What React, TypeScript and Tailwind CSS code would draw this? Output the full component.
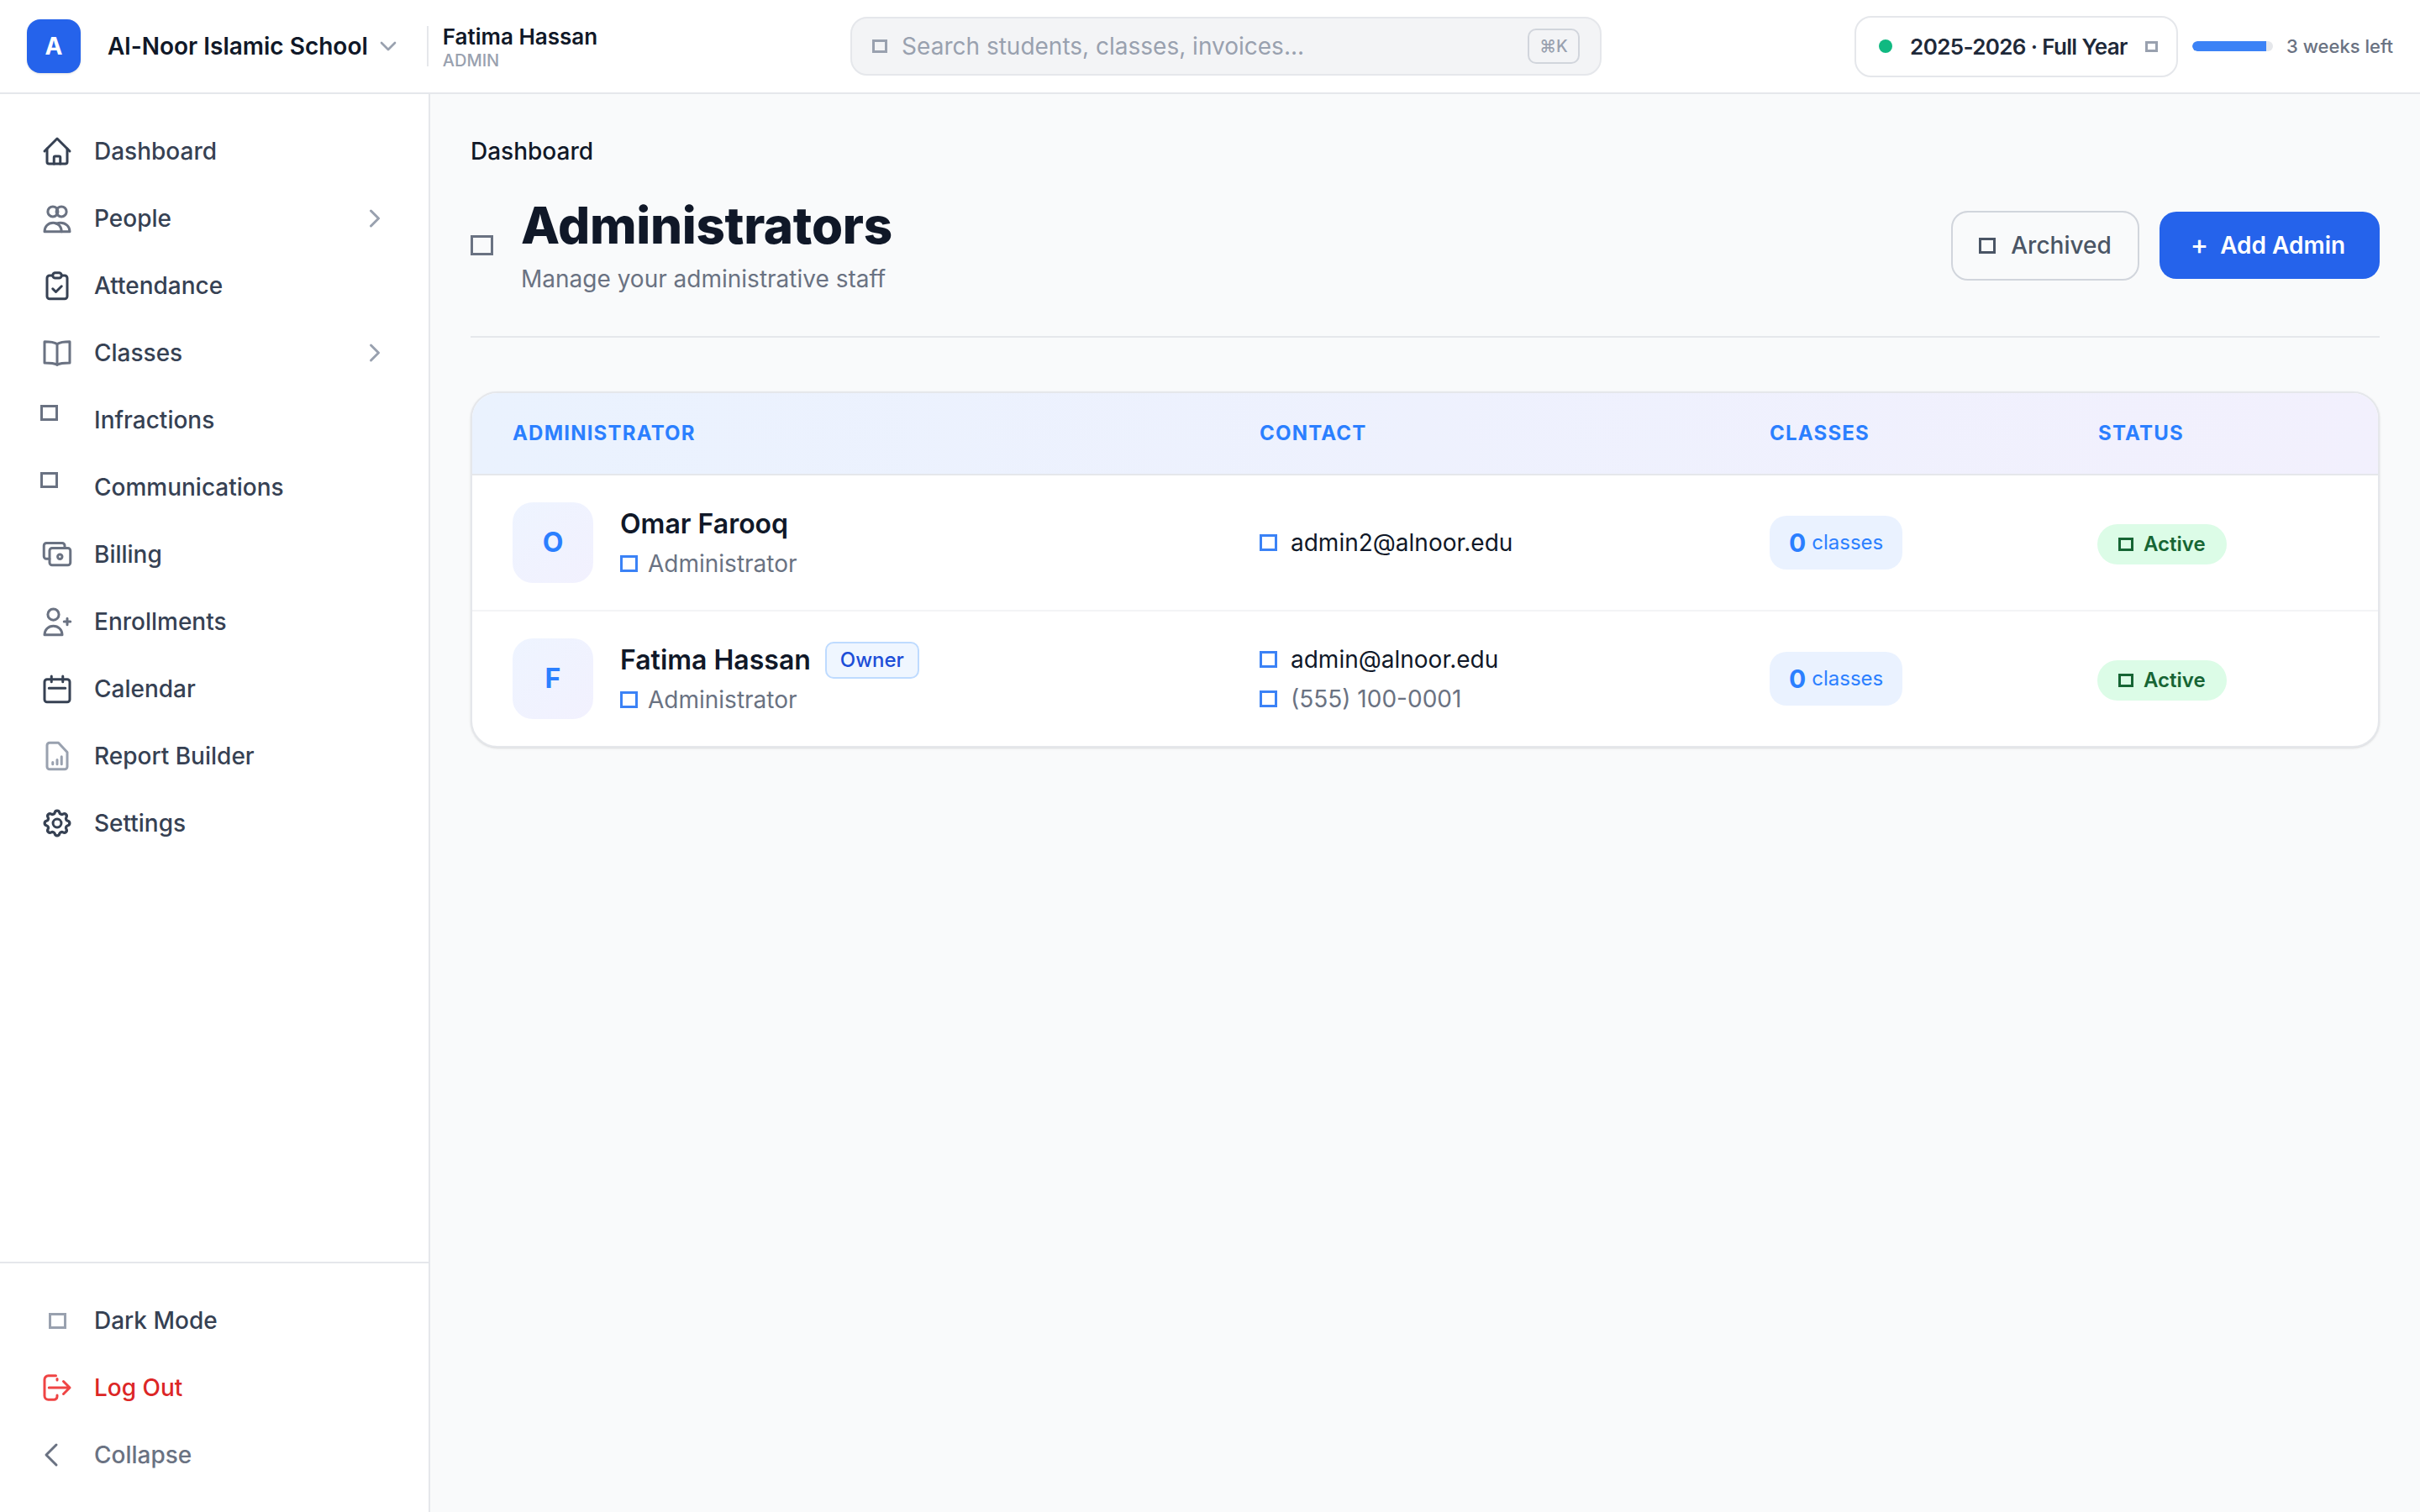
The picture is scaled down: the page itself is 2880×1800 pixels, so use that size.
import { ChevronDown, ChevronLeft, ChevronRight } from 'lucide-react'
import type { ReactNode } from 'react'

const Tofu = ({ className = '' }: { className?: string }) => (
  <span className={`block shrink-0 border-[3px] ${className}`} />
)

const Ico = ({ children, className = '' }: { children: ReactNode; className?: string }) => (
  <svg
    viewBox="0 0 24 24"
    fill="none"
    stroke="currentColor"
    strokeWidth={2}
    strokeLinecap="round"
    strokeLinejoin="round"
    className={`w-9 h-9 shrink-0 ${className}`}
  >
    {children}
  </svg>
)

const nav = [
  {
    label: 'Dashboard',
    icon: (
      <Ico className="text-gray-700">
        <path d="M2 12 12 2l10 10" />
        <path d="M4 10v10.5a1.5 1.5 0 0 0 1.5 1.5h13a1.5 1.5 0 0 0 1.5-1.5V10" />
        <path d="M9.5 22v-5a1 1 0 0 1 1-1h3a1 1 0 0 1 1 1v5" />
      </Ico>
    ),
  },
  {
    label: 'People',
    arrow: true,
    icon: (
      <Ico className="text-gray-500">
        <circle cx="8.6" cy="6.6" r="4" />
        <circle cx="15.4" cy="6.6" r="4" />
        <path d="M2 22.5c0-4 2.8-7 6.8-7s6.7 3 6.7 7z" />
        <path d="M11.5 16.2c1-.5 2.2-.7 3.2-.7 4.3 0 7.3 3 7.3 7h-6.5" />
      </Ico>
    ),
  },
  {
    label: 'Attendance',
    icon: (
      <Ico className="text-gray-700">
        <path d="M8.5 4H6a2 2 0 0 0-2 2v14.5a2 2 0 0 0 2 2h12a2 2 0 0 0 2-2V6a2 2 0 0 0-2-2h-2.5" />
        <rect x="8.5" y="1.8" width="7" height="4.2" rx="2" />
        <path d="m8.5 14.5 2.5 2.5 4.5-4.5" />
      </Ico>
    ),
  },
  {
    label: 'Classes',
    arrow: true,
    icon: (
      <Ico className="text-gray-500">
        <path d="M12 5C10 3.800 7 3.200 2 3.200V20c5 0 8 .4 10 1.500 2-1.100 5-1.500 10-1.500V3.200C17 3.200 14 3.800 12 5z" />
        <path d="M12 5v16.500" />
      </Ico>
    ),
  },
  { label: 'Infractions', tofu: true },
  { label: 'Communications', tofu: true },
  {
    label: 'Billing',
    icon: (
      <Ico className="text-gray-500">
        <path d="M18 6.500V5a2 2 0 0 0-2-2H3.500a2 2 0 0 0-2 2v8.500a2 2 0 0 0 2 2H6" />
        <rect x="6" y="7" width="16.500" height="13.500" rx="2" />
        <circle cx="14.200" cy="13.800" r="1.800" />
      </Ico>
    ),
  },
  {
    label: 'Enrollments',
    icon: (
      <Ico className="text-gray-500">
        <circle cx="9" cy="6.400" r="4.400" />
        <path d="M2 22.500c0-4 3-7 7-7s7 3 7 7z" />
        <path d="M17.500 12h5M20 9.500v5" />
      </Ico>
    ),
  },
  {
    label: 'Calendar',
    icon: (
      <Ico className="text-gray-700">
        <rect x="2" y="4.500" width="20" height="18" rx="2" />
        <path d="M7.500 2v4.500M16.500 2v4.500M5.500 11.500h13" />
      </Ico>
    ),
  },
  {
    label: 'Report Builder',
    icon: (
      <Ico className="text-gray-400">
        <path d="M6 1.500h7l7 7.500v11.500a2 2 0 0 1-2 2H6a2 2 0 0 1-2-2v-17a2 2 0 0 1 2-2z" />
        <path d="M8.500 18.500v-1.500M12 18.500v-3.500M15.500 18.500v-6" />
      </Ico>
    ),
  },
  {
    label: 'Settings',
    icon: (
      <Ico className="text-gray-700">
        <path d="M10.325 4.317c.426-1.756 2.924-1.756 3.35 0a1.724 1.724 0 0 0 2.573 1.066c1.543-.94 3.31.826 2.37 2.37a1.724 1.724 0 0 0 1.065 2.572c1.756.426 1.756 2.924 0 3.35a1.724 1.724 0 0 0-1.066 2.573c.94 1.543-.826 3.31-2.37 2.37a1.724 1.724 0 0 0-2.572 1.065c-.426 1.756-2.924 1.756-3.35 0a1.724 1.724 0 0 0-2.573-1.066c-1.543.94-3.31-.826-2.37-2.37a1.724 1.724 0 0 0-1.065-2.572c-1.756-.426-1.756-2.924 0-3.35a1.724 1.724 0 0 0 1.066-2.573c-.94-1.543.826-3.31 2.37-2.37 1 .608 2.296.07 2.572-1.065z" transform="translate(-1.200 -1.200) scale(1.100)" />
        <circle cx="12" cy="12" r="3.300" />
      </Ico>
    ),
  },
]

const NavItem = ({ label, icon, arrow, tofu }: { label: string; icon?: ReactNode; arrow?: boolean; tofu?: boolean }) => (
  <div className="flex items-center h-20 pl-[50px] pr-[46px] gap-[26px] text-[28px] font-medium text-gray-700">
    {tofu ? (
      <span className="w-9 h-9 shrink-0">
        <Tofu className="w-[21px] h-[19px] border-gray-500 -ml-[2px]" />
      </span>
    ) : (
      icon
    )}
    <span className="flex-1">{label}</span>
    {arrow && <ChevronRight strokeWidth={2} className="w-9 h-9 text-gray-400" />}
  </div>
)

const Sidebar = () => (
  <aside className="w-[512px] shrink-0 flex flex-col justify-between bg-white border-r-2 border-gray-200">
    <nav className="pt-7">
      {nav.map((n) => (
        <NavItem key={n.label} {...n} />
      ))}
    </nav>
    <div className="border-t-2 border-gray-200 py-7">
      <div className="flex items-center h-20 pl-[50px] gap-[26px] text-[28px] font-medium text-gray-700">
        <span className="w-9 h-9 shrink-0 flex items-center justify-center">
          <Tofu className="w-[21px] h-[19px] border-gray-400" />
        </span>
        Dark Mode
      </div>
      <div className="flex items-center h-20 pl-[50px] gap-[26px] text-[28px] font-medium text-[#dc2626]">
        <Ico className="text-[#ef4444]">
          <path d="M11 2.500H5a3 3 0 0 0-3 3v13a3 3 0 0 0 3 3h4.500a2.500 2.500 0 0 0 2.500-2.500V18" />
          <path d="M12 6V5" />
          <path d="M5.500 12H22M17 7l5 5-5 5" />
        </Ico>
        Log Out
      </div>
      <div className="flex items-center h-20 pl-[50px] gap-[26px] text-[28px] font-medium text-gray-500">
        <span className="w-9 h-9 shrink-0 flex items-center justify-center">
          <ChevronLeft strokeWidth={1.5} className="w-12 h-12 shrink-0 -ml-[15px]" />
        </span>
        Collapse
      </div>
    </div>
  </aside>
)

const Header = () => (
  <header className="h-[112px] shrink-0 flex items-center justify-between bg-white border-b-2 border-gray-200 px-8">
    <div className="flex items-center">
      <div className="w-16 h-16 rounded-2xl bg-[#2563eb] shadow-sm flex items-center justify-center text-white text-[28px] font-bold">
        A
      </div>
      <span className="ml-8 text-[28px] font-semibold text-gray-900">Al-Noor Islamic School</span>
      <ChevronDown strokeWidth={2} className="ml-[8px] w-8 h-8 text-gray-400" />
      <div className="ml-[30px] w-[2px] h-12 bg-gray-200" />
      <div className="ml-[17px] flex flex-col -mt-[3px]">
        <span className="text-[26px] leading-[36px] font-semibold text-gray-900">Fatima Hassan</span>
        <span className="text-[20px] leading-[20px] font-medium text-gray-400">ADMIN</span>
      </div>
    </div>
    <div className="w-[894px] h-[70px] flex items-center bg-gray-100 border-2 border-gray-200 rounded-[20px] pl-6 pr-6">
      <Tofu className="w-[18px] h-4 border-gray-400 border-[2.500px]" />
      <span className="ml-[17px] flex-1 text-[28px] text-gray-400">Search students, classes, invoices...</span>
      <kbd className="w-[62px] h-[42px] flex items-center justify-center rounded-[10px] border-2 border-gray-300 text-[20px] font-medium text-gray-400 font-['Inter','Noto_Sans',sans-serif]">
        ⌘K
      </kbd>
    </div>
    <div className="flex items-center">
      <div className="w-[385px] h-[73px] flex items-center rounded-[20px] border-2 border-gray-200 pl-[27px]">
        <span className="w-4 h-4 rounded-full bg-[#10b981]" />
        <span className="ml-[21px] text-[26px] font-semibold tracking-tight text-gray-800 whitespace-nowrap">2025-2026 · Full Year</span>
        <Tofu className="ml-[21px] w-[15px] h-[13px] border-gray-400 border-2" />
      </div>
      <div className="ml-[17px] w-24 h-3 rounded-full bg-gray-200 overflow-hidden">
        <div className="w-[92%] h-full rounded-l-full bg-[#3b82f6]" />
      </div>
      <span className="ml-4 text-[22px] font-medium text-gray-500">3 weeks left</span>
    </div>
  </header>
)

const Role = () => (
  <div className="flex items-center gap-[12px] text-[28px] leading-[40px] text-gray-500">
    <Tofu className="w-[21px] h-[20px] border-[#3b82f6]" />
    Administrator
  </div>
)

const ContactLine = ({ text, className }: { text: string; className: string }) => (
  <div className={`flex items-center gap-[16px] text-[28px] leading-[40px] ${className}`}>
    <Tofu className="w-[21px] h-[20px] border-[#3b82f6]" />
    {text}
  </div>
)

const rows = [
  { letter: 'O', name: 'Omar Farooq', owner: false, email: 'admin2@alnoor.edu', phone: '' },
  { letter: 'F', name: 'Fatima Hassan', owner: true, email: 'admin@alnoor.edu', phone: '(555) 100-0001' },
]

const cols = 'grid grid-cols-[889px_607px_391px_381px] items-center'

const Row = ({ letter, name, owner, email, phone }: (typeof rows)[number]) => (
  <div className={`${cols} h-[162px] border-b-2 border-gray-100 last:h-40 last:border-b-0`}>
    <div className="pl-12 flex items-center gap-[32px]">
      <div className="w-24 h-24 rounded-3xl bg-gradient-to-br from-[#eef4ff] to-[#f2f1fe] flex items-center justify-center text-[32px] font-bold text-blue-500">
        {letter}
      </div>
      <div className="flex flex-col gap-[5px]">
        <div className="flex items-center gap-[17px] h-[44px]">
          <span className="text-[32px] font-semibold text-gray-900">{name}</span>
          {owner && (
            <span className="h-[44px] w-[112px] flex items-center justify-center rounded-[10px] border-2 border-blue-200 bg-blue-50 text-[24px] font-medium text-[#1d4ed8]">
              Owner
            </span>
          )}
        </div>
        <Role />
      </div>
    </div>
    <div className="pl-12 flex flex-col gap-[7px]">
      <ContactLine text={email} className="text-gray-900" />
      {phone && <ContactLine text={phone} className="text-gray-500" />}
    </div>
    <div className="pl-12">
      <div className="w-[158px] h-16 flex items-center gap-[7px] pl-[23px] rounded-[20px] bg-[#eaf2ff] text-blue-500">
        <span className="text-[30px] font-bold">0</span>
        <span className="text-[24px]">classes</span>
      </div>
    </div>
    <div className="pl-[47px]">
      <div className="w-[154px] h-12 mt-1 flex items-center gap-[12px] pl-[25px] rounded-full bg-[#dcfce7] text-[24px] font-semibold text-[#166534]">
        <Tofu className="w-[18px] h-[16px] border-[#166534] border-[2.500px]" />
        Active
      </div>
    </div>
  </div>
)

export default function App() {
  return (
    <div className="w-[2880px] h-[1800px] flex flex-col overflow-hidden bg-gray-50 font-['Inter',sans-serif]">
      <Header />
      <div className="flex flex-1 min-h-0">
        <Sidebar />
        <main className="flex-1 pl-12 pr-12 pt-[48px]">
          <div className="text-[28px] leading-10 font-medium text-gray-900">Dashboard</div>
          <div className="mt-8 flex items-center justify-between pb-12 border-b-2 border-gray-200">
            <div className="flex items-center">
              <Tofu className="w-[27px] h-[24px] border-gray-500 border-4" />
              <div className="ml-[33px]">
                <h1 className="text-[60px] leading-[72px] font-extrabold tracking-[-0.3px] text-gray-900">Administrators</h1>
                <p className="mt-2 text-[28px] leading-10 text-gray-500">Manage your administrative staff</p>
              </div>
            </div>
            <div className="flex items-center gap-6">
              <button className="w-[224px] h-[83px] flex items-center justify-center gap-[18px] rounded-[20px] border-2 border-gray-300 text-[28px] font-medium text-gray-600">
                <Tofu className="w-[20px] h-[19px] border-gray-600" />
                Archived
              </button>
              <button className="w-[262px] h-20 flex items-center justify-center gap-[14px] pr-1 rounded-[20px] bg-[#2563eb] text-[28px] font-semibold text-white">
                <span className="text-[32px] font-medium">+</span>
                Add Admin
              </button>
            </div>
          </div>
          <div className="mt-16 rounded-[32px] border-2 border-gray-200 bg-white shadow-sm overflow-hidden">
            <div className={`${cols} h-[98px] border-b-2 border-gray-200 bg-gradient-to-r from-[#eaf2fe] to-[#f2f0fd] text-[24px] font-bold tracking-wider text-blue-500`}>
              <span className="pl-12">ADMINISTRATOR</span>
              <span className="pl-12">CONTACT</span>
              <span className="pl-12">CLASSES</span>
              <span className="pl-12">STATUS</span>
            </div>
            {rows.map((r) => (
              <Row key={r.letter} {...r} />
            ))}
          </div>
        </main>
      </div>
    </div>
  )
}
